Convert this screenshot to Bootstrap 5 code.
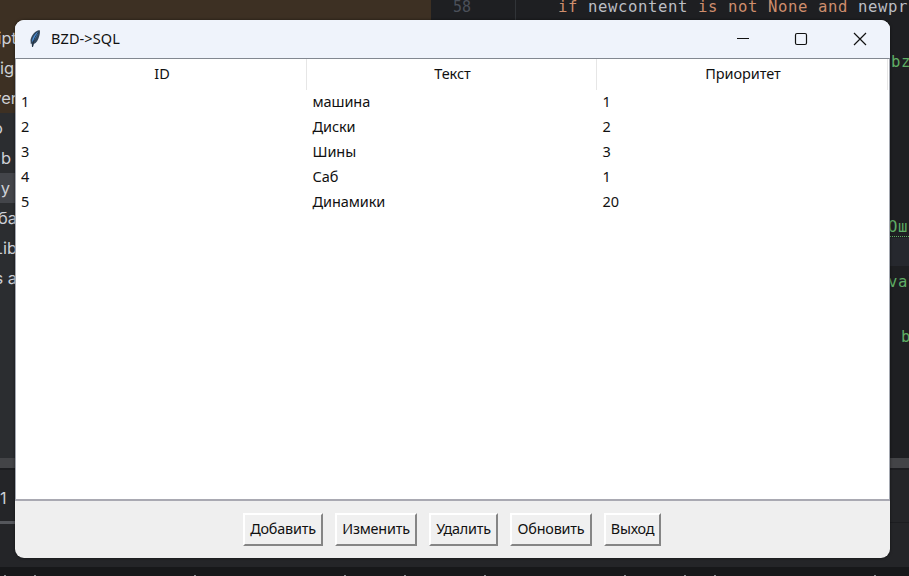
<!DOCTYPE html>
<html lang="ru">
<head>
<meta charset="utf-8">
<title>BZD-&gt;SQL</title>
<link href="https://cdn.jsdelivr.net/npm/bootstrap@5.3.0/dist/css/bootstrap.min.css" rel="stylesheet">
<style>
body{width:909px;height:576px;background:#1e1f22;font-family:"Noto Sans","Open Sans",sans-serif;font-size:14.5px;color:#111}
.desk{width:909px;height:576px}
.ide-tree{width:431px;height:458px;background:#2b2d30;font:16.5px/30px Inter,sans-serif;color:#ced0d6}
.tree-warm{height:113px;background:#3d3023;padding-top:23px}
.tree-line{height:30px;width:17px;white-space:nowrap;direction:rtl;overflow:hidden}
.tree-line span{unicode-bidi:embed;direction:ltr}
.tree-start{direction:ltr;padding-left:0}
.tree-on{background:#43454a}
.ide-code{height:458px;color:#bcbec4}
.mono{font-family:"DejaVu Sans Mono",monospace;font-size:15.6px;letter-spacing:.61px;white-space:pre}
.gutter{font-size:15px;letter-spacing:0;color:#4b5059}
.kw{color:#cf8e6d}.str{color:#5fad65}
.on-code{position:absolute;line-height:20px}
.code-row{position:absolute;left:457px;right:0;top:238px;height:28px;background:#26282e}
.guide{position:absolute;left:84px;top:0;width:1px;height:20px;background:#313438}
.split{height:10px;background:#434447}
.panel{height:99px;background:#242528;border-top:2px solid #1c1d20}
.panel-tab{height:54px;width:18px;font:16px/56px Inter,sans-serif;color:#ced0d6;border-bottom:3px solid #55575c}
.panel-rest{height:53px;border-bottom:1px solid #1c1d20}
.below{height:9px;background:#17181a}
.speck{position:absolute;top:575px;width:2px;height:1px;background:#8d8f94}
.win{position:absolute;left:15px;top:20px;width:875px;height:538px;border-radius:9px;background:#efefef;overflow:hidden;box-shadow:0 0 3px #0008}
.bar{height:38px;background:#eff3fb;padding-left:13px}
.win-title{font-size:14.5px;letter-spacing:.1px;color:#111;margin-left:9px}
.cap{width:58.5px;height:38px}
.caps{margin-right:1px}
.grid-box{height:443px;background:#fff;border:1px solid;border-width:1px 1px 2px 1px;border-color:#828790 #a5a9b2 #a9a9b2 #a5a9b2;letter-spacing:-.08px}
.heads{height:30px}
.heads>div{border-right:1px solid #e6e6e6;text-align:center;line-height:29px;height:31px;padding-left:2px}
.c1{width:291px}.c2{width:290px}.c3{width:291px}
.line-row{height:25px;line-height:25px}
.line-row>div{padding-left:5px}
.line-row>div+div{padding-left:5.5px}
.tk{height:33px;border:2px solid;border-color:#fff #858585 #858585 #fff;background:#f0f0f0;color:#111;font-size:14.4px;letter-spacing:-.2px;padding:0;line-height:28px;border-radius:0}
.foot{padding:11.5px 0 0 228px}
.w-a{width:80px}.w-b{width:82px}.w-c{width:69px}.w-d{width:57px}
</style>
</head>
<body class="m-0 overflow-hidden">
<main class="desk position-relative overflow-hidden">
 <div class="d-flex">
  <div class="ide-tree flex-shrink-0">
   <div class="tree-warm">
    <div class="tree-line"><span>ipt</span></div><div class="tree-line tree-start"><span>ign</span></div><div class="tree-line"><span>ver</span></div>
   </div>
   <div class="tree-line" style="width:3px"><span>o</span></div>
   <div class="tree-line" style="width:11px"><span>b</span></div>
   <div class="tree-on"><div class="tree-line" style="width:10px"><span>y</span></div></div>
   <div class="tree-line"><span>ба</span></div>
   <div class="tree-line"><span>Lib</span></div>
   <div class="tree-line"><span>s a</span></div>
  </div>
  <div class="ide-code flex-grow-1 position-relative">
   <div class="guide"></div>
   <div class="on-code mono gutter" style="left:22px;top:-3px">58</div>
   <div class="on-code mono" style="left:127px;top:-3px"><span class="kw">if</span> newcontent <span class="kw">is not None and</span> newpr</div>
  </div>
 </div>
 <div class="code-row"></div>
 <div class="on-code mono str" style="left:891px;top:52px">bz</div>
 <div class="on-code mono str" style="left:888px;top:217px;text-decoration:underline dotted 1px;text-underline-offset:4px">Оши</div>
 <div class="on-code mono str" style="left:888px;top:272px">val</div>
 <div class="on-code mono str" style="left:901px;top:327px">b</div>
 <div class="split"></div>
 <div class="panel d-flex"><div class="panel-tab">1</div><div class="panel-rest flex-grow-1"></div></div>
 <div class="below"></div>
 <i class="speck" style="left:4px"></i><i class="speck" style="left:34px"></i><i class="speck" style="left:194px"></i><i class="speck" style="left:344px"></i><i class="speck" style="left:404px"></i><i class="speck" style="left:484px"></i><i class="speck" style="left:624px"></i><i class="speck" style="left:684px"></i><i class="speck" style="left:714px"></i><i class="speck" style="left:874px"></i>

 <section class="win d-flex flex-column">
  <header class="bar d-flex align-items-center">
   <svg width="14" height="22" viewBox="0 0 14 22"><path d="M11.500 2C7 3 3.500 7 2.500 12l.3 4 .9-.5.3 3.500h1l.8-3c2.500-1 4.500-4 5.500-8 .7-2.500 1-4.500.2-6Z" fill="#33475c"/><path d="M10.500 3.500C7 5.500 4.500 9 3.800 14c3-2 5.500-6 6.700-10.500Z" fill="#4b91dc"/><path d="M10.800 3.500C8 7.500 5.500 11 4.500 18.500" stroke="#1b2836" stroke-width=".8" fill="none"/></svg>
   <div class="win-title me-auto">BZD-&gt;SQL</div>
   <div class="caps d-flex">
    <div class="cap d-flex align-items-center justify-content-center"><svg width="14" height="14"><path d="M1 6.500h12" stroke="#111" stroke-width="1"/></svg></div>
    <div class="cap d-flex align-items-center justify-content-center"><svg width="14" height="14"><rect x="1.500" y="1.500" width="11" height="11" rx="1.500" fill="none" stroke="#111" stroke-width="1.200"/></svg></div>
    <div class="cap d-flex align-items-center justify-content-center"><svg width="14" height="14"><path d="M1 1l12 12M13 1L1 13" stroke="#111" stroke-width="1.200"/></svg></div>
   </div>
  </header>
  <div class="grid-box">
   <div class="heads d-flex"><div class="c1">ID</div><div class="c2">Текст</div><div class="c3">Приоритет</div></div>
   <div class="line-row d-flex"><div class="c1">1</div><div class="c2">машина</div><div class="c3">1</div></div>
   <div class="line-row d-flex"><div class="c1">2</div><div class="c2">Диски</div><div class="c3">2</div></div>
   <div class="line-row d-flex"><div class="c1">3</div><div class="c2">Шины</div><div class="c3">3</div></div>
   <div class="line-row d-flex"><div class="c1">4</div><div class="c2">Саб</div><div class="c3">1</div></div>
   <div class="line-row d-flex"><div class="c1">5</div><div class="c2">Динамики</div><div class="c3">20</div></div>
  </div>
  <footer class="foot d-flex align-items-start flex-grow-1">
   <div class="d-flex" style="gap:12px">
    <button class="btn tk w-a">Добавить</button><button class="btn tk w-b">Изменить</button><button class="btn tk w-c">Удалить</button><button class="btn tk w-b">Обновить</button><button class="btn tk w-d">Выход</button>
   </div>
  </footer>
 </section>
</main>
<script src="https://cdn.jsdelivr.net/npm/bootstrap@5.3.0/dist/js/bootstrap.bundle.min.js"></script>
</body>
</html>
